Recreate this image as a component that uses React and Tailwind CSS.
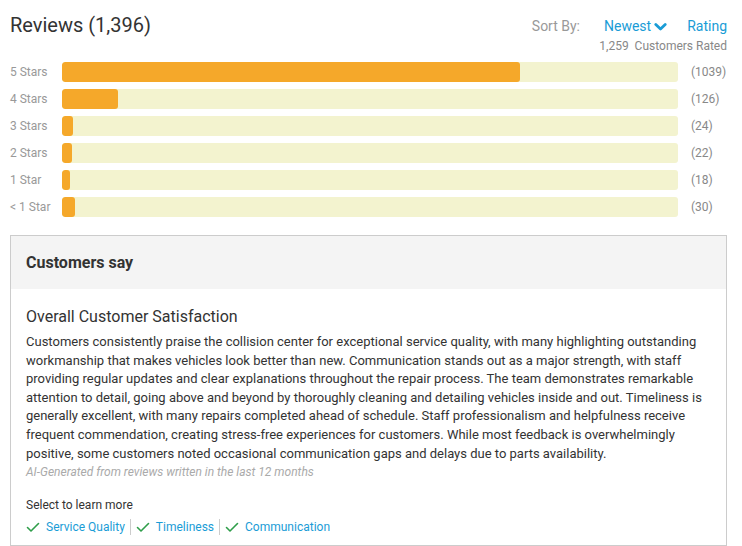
import React from "react";

const total = 1396;
const rows = [
  { label: "5 Stars", count: 1039 },
  { label: "4 Stars", count: 126 },
  { label: "3 Stars", count: 24 },
  { label: "2 Stars", count: 22 },
  { label: "1 Star", count: 18 },
  { label: "< 1 Star", count: 30 },
];

const topics = ["Service Quality", "Timeliness", "Communication"];

function Check() {
  return (
    <svg width="14" height="14" viewBox="0 0 14 14" className="shrink-0">
      <path d="M1.5 7.5 L5 11 L12.5 3.5" fill="none" stroke="#2f9e4a" strokeWidth="1.6" strokeLinecap="round" strokeLinejoin="round" />
    </svg>
  );
}

export default function App() {
  return (
    <div className="w-[742px] h-[546px] bg-white text-[#333] overflow-hidden" style={{ fontFamily: "Roboto, 'Liberation Sans', sans-serif" }}>
      {/* Header */}
      <div className="flex justify-between pl-[10px] pr-[15px] pt-[11px]">
        <h1 className="text-[20px] leading-[28px] text-[#333]">Reviews (1,396)</h1>
        <div className="flex flex-col items-end pt-[5px]">
          <div className="flex items-center text-[14px] leading-[20px]">
            <span className="text-[#999] mr-[24px]">Sort By:</span>
            <span className="text-[#1a9cd6] flex items-center">
              Newest
              <svg width="13" height="10" viewBox="0 0 13 10" className="ml-[3px] mt-[1px]">
                <path d="M1.8 2.5 L6.5 7 L11.2 2.5" fill="none" stroke="#1a9cd6" strokeWidth="2.8" strokeLinecap="round" strokeLinejoin="round" />
              </svg>
            </span>
            <span className="text-[#1a9cd6] ml-[20px]">Rating</span>
          </div>
          <div className="text-[12px] leading-[16px] text-[#888] mt-[2px]">1,259&nbsp; Customers Rated</div>
        </div>
      </div>

      {/* Bars */}
      <div className="flex flex-col gap-[7px] pl-[10px] pr-[15px] mt-[8px]">
        {rows.map((r) => (
          <div key={r.label} className="flex items-center h-[20px]">
            <span className="w-[52px] text-[12px] text-[#999] shrink-0">{r.label}</span>
            <div className="w-[616px] h-[20px] rounded-[3px] bg-[#f3f3cf] overflow-hidden shrink-0">
              <div className="h-full bg-[#f5a82a] rounded-[3px]" style={{ width: `${(r.count / total) * 100}%` }} />
            </div>
            <span className="ml-[13px] text-[12px] text-[#888]">({r.count})</span>
          </div>
        ))}
      </div>

      {/* Customers say card */}
      <div className="mx-[10px] w-[717px] mt-[18px] border border-[#cccccc] h-[311px]">
        <div className="bg-[#f4f4f4] h-[53px] flex items-center px-[15px]">
          <h2 className="text-[16px] font-bold text-[#333]">Customers say</h2>
        </div>
        <div className="px-[15px] pt-[18px]">
          <h3 className="text-[16px] leading-[20px] text-[#333]">Overall Customer Satisfaction</h3>
          <p className="text-[13px] leading-[18.6px] text-[#333] mt-[6px]">
            Customers consistently praise the collision center for exceptional service quality, with many highlighting outstanding workmanship that makes vehicles look better than new. Communication stands out as a major strength, with staff providing regular updates and clear explanations throughout the repair process. The team demonstrates remarkable attention to detail, going above and beyond by thoroughly cleaning and detailing vehicles inside and out. Timeliness is generally excellent, with many repairs completed ahead of schedule. Staff professionalism and helpfulness receive frequent commendation, creating stress-free experiences for customers. While most feedback is overwhelmingly positive, some customers noted occasional communication gaps and delays due to parts availability.
          </p>
          <p className="text-[12px] leading-[16px] italic text-[#aaa] mt-[1px]">AI-Generated from reviews written in the last 12 months</p>
          <p className="text-[12px] leading-[16px] text-[#333] mt-[17px]">Select to learn more</p>
          <div className="flex items-center mt-[6px] text-[12px] leading-[16px]">
            {topics.map((t, i) => (
              <div key={t} className={`flex items-center gap-[6px] ${i > 0 ? "border-l border-[#ccc] pl-[5px] ml-[5px]" : ""}`}>
                <Check />
                <span className="text-[#1a9cd6]">{t}</span>
              </div>
            ))}
          </div>
        </div>
      </div>
    </div>
  );
}
